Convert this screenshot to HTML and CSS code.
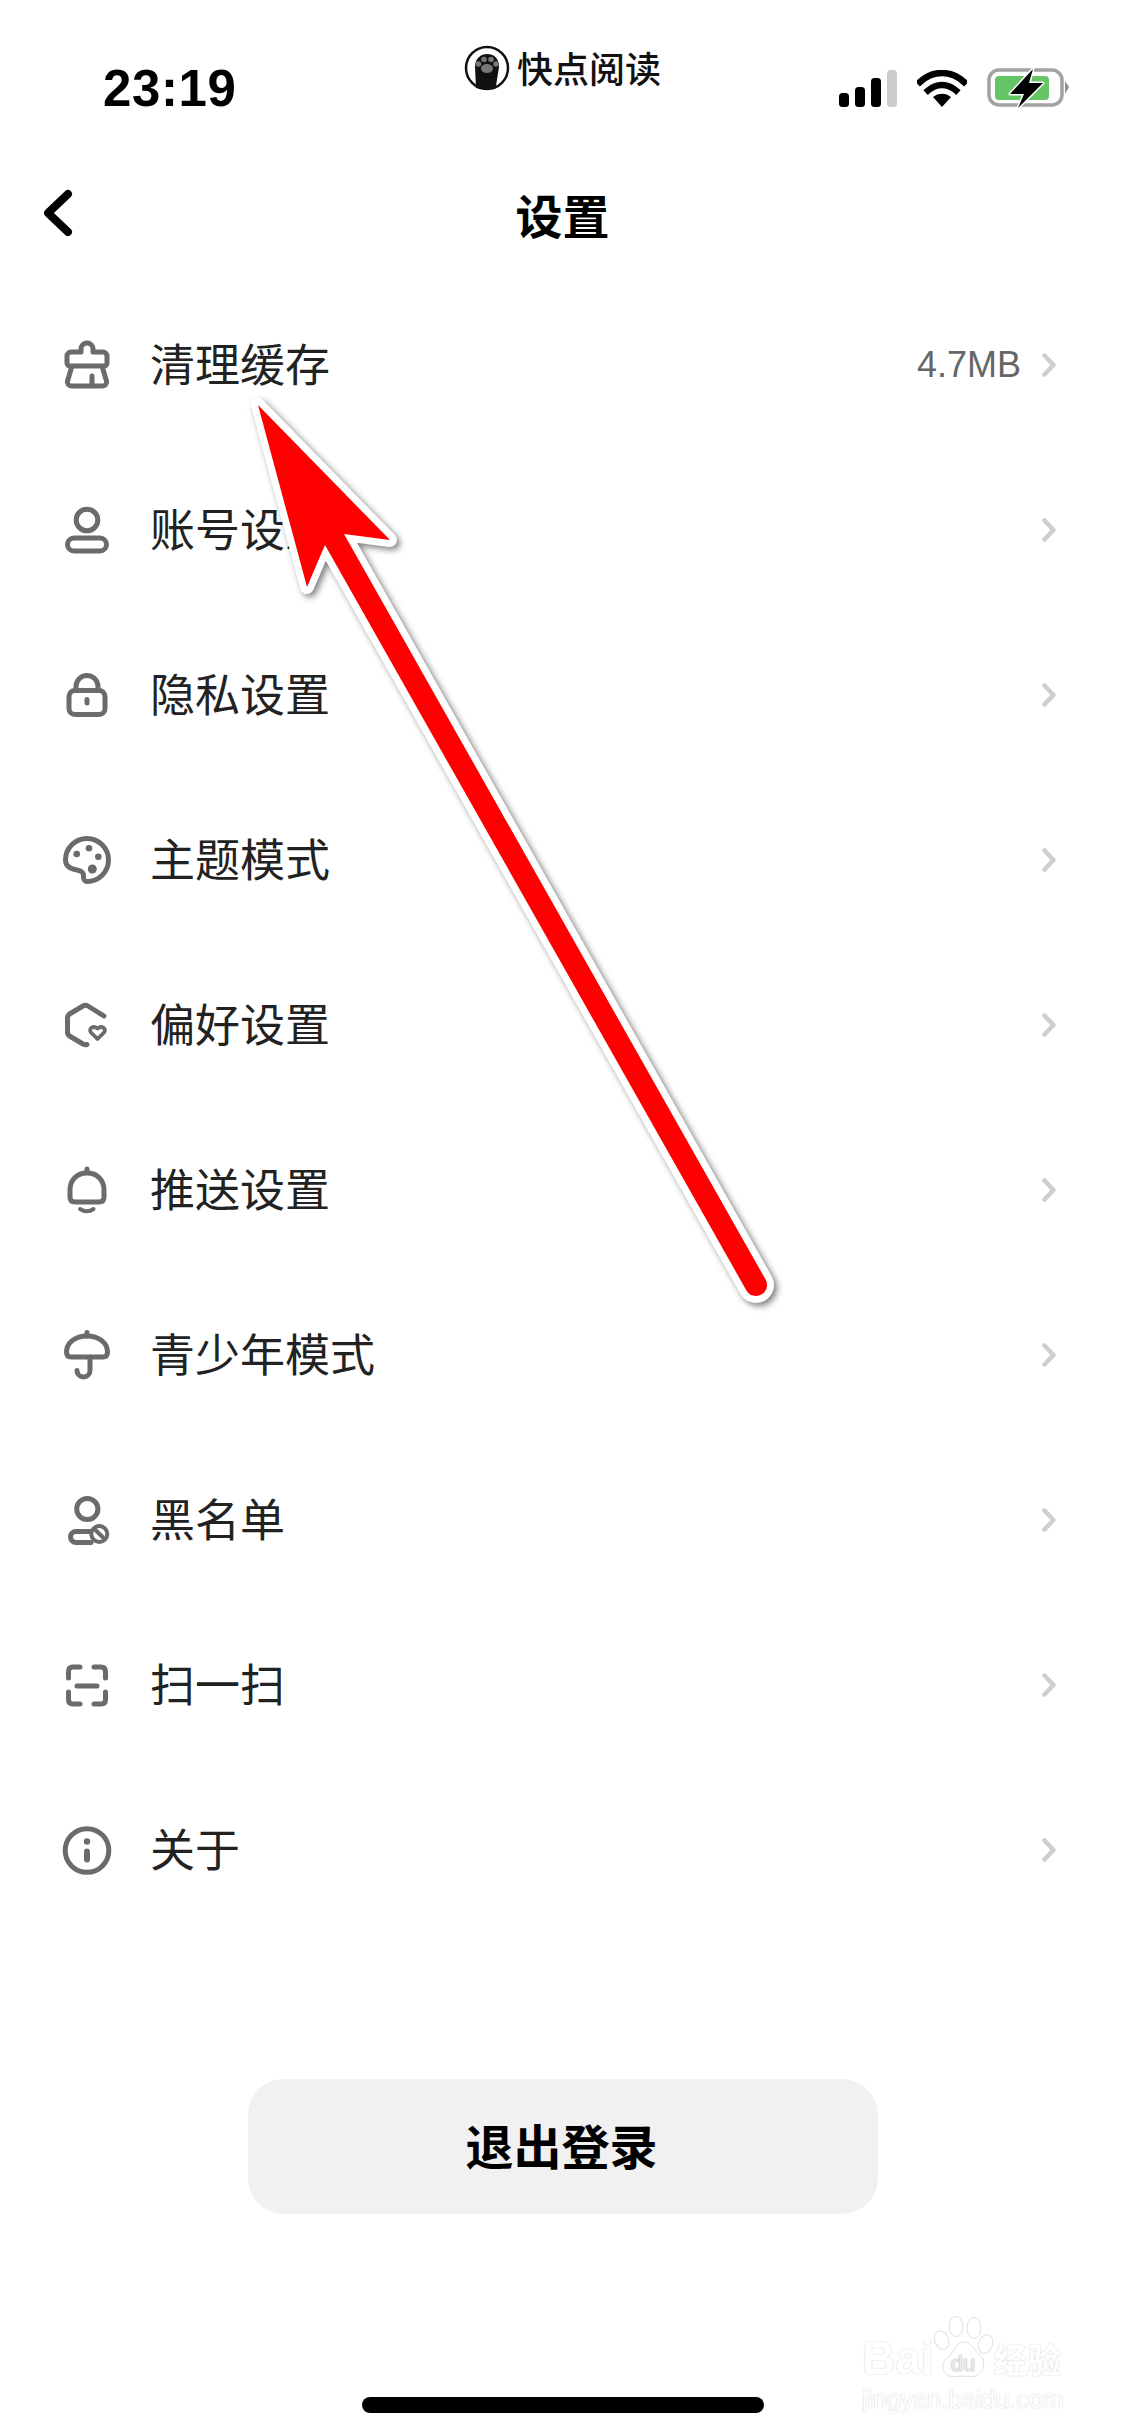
FILE: index.html
```html
<!DOCTYPE html>
<html lang="zh-CN">
<head>
  <meta charset="UTF-8" />
  <meta name="viewport" content="width=device-width, initial-scale=1" />
  <title>设置</title>
  <link rel="stylesheet" href="styles.css">
</head>
<body>
  <svg class="defs" width="0" height="0">
    <symbol id="chev" viewBox="0 0 14 24">
      <path d="M2.5 2.5 L11.5 12 L2.5 21.5" fill="none" stroke="#cfcfcf" stroke-width="4.5" stroke-linecap="round" stroke-linejoin="round"/>
    </symbol>
  </svg>

  <div class="page">
    <div class="status">
      <div class="time">23:19</div>
      <div class="brand">
        <svg class="brand-logo" viewBox="0 0 46 46">
          <circle cx="23" cy="23" r="21" fill="#fff" stroke="#111" stroke-width="2.5"/>
          <path d="M12 43 L11 22 C11 13 17 9 23 9 C30 9 35 13 35 22 L32 41 Q23 46 12 43Z" fill="#111"/>
          <circle cx="14.5" cy="19" r="2.800" fill="#777"/>
          <circle cx="20" cy="14.500" r="2.800" fill="#777"/>
          <circle cx="27" cy="14.500" r="2.800" fill="#777"/>
          <circle cx="32" cy="19" r="2.800" fill="#777"/>
          <ellipse cx="23" cy="23.500" rx="6" ry="4.500" fill="#777"/>
        </svg>
        <span class="brand-name">快点阅读</span>
      </div>
      <div class="status-icons">
        <svg class="signal" viewBox="0 0 58 37">
          <rect x="0" y="23" width="10" height="14" rx="3.5" fill="#000"/>
          <rect x="16" y="17" width="10" height="20" rx="3.5" fill="#000"/>
          <rect x="32" y="8" width="10" height="29" rx="3.5" fill="#000"/>
          <rect x="48" y="0" width="10" height="37" rx="3.5" fill="#ccc"/>
        </svg>
        <svg class="wifi" viewBox="0 0 50 37">
          <path d="M3 12 C16 0 34 0 47 12" fill="none" stroke="#000" stroke-width="6.5" stroke-linecap="square"/>
          <path d="M11 20.5 C19 13 31 13 39 20.5" fill="none" stroke="#000" stroke-width="6.5" stroke-linecap="square"/>
          <path d="M16 27 C21 22.5 29 22.5 34 27 L25 37Z" fill="#000"/>
        </svg>
        <svg class="battery" viewBox="0 0 84 40">
          <rect x="2" y="2" width="73" height="35" rx="10" fill="#fff" stroke="#a3a3a3" stroke-width="3.5"/>
          <rect x="8" y="8" width="54" height="24" rx="4" fill="#65c466"/>
          <path d="M78 13 L82 19 L78 26Z" fill="#8e8e8e"/>
          <path d="M46 1 L23 26 L37 26 L31 40 L56 15 L42 15Z" fill="#000" stroke="#fff" stroke-width="3" stroke-linejoin="round" paint-order="stroke"/>
        </svg>
      </div>
    </div>

    <div class="navbar">
      <svg class="back" viewBox="0 0 34 50">
        <path d="M28 6 L8 25 L28 44" fill="none" stroke="#000" stroke-width="8" stroke-linecap="round" stroke-linejoin="round"/>
      </svg>
      <h1>设置</h1>
    </div>

    <ul class="menu">
      <li class="row">
        <svg class="icon" viewBox="0 0 48 48">
          <path d="M18 11 V8 a6 6 0 0 1 12 0 V11 H40 a4 4 0 0 1 4 4 V22 a3 3 0 0 1 -3 3 H7 a3 3 0 0 1 -3 -3 V15 a4 4 0 0 1 4 -4Z M9 25 L4.500 40 a4 4 0 0 0 4 5 H39.500 a4 4 0 0 0 4 -5 L39 25 M29 35 V45"/>
        </svg>
        <span class="label">清理缓存</span>
        <span class="value">4.7MB</span>
        <svg class="chev"><use href="#chev"/></svg>
      </li>
      <li class="row">
        <svg class="icon" viewBox="0 0 48 48">
          <circle cx="24" cy="14" r="10.800"/>
          <rect x="4.500" y="32" width="39" height="13" rx="6.500"/>
        </svg>
        <span class="label">账号设置</span>
        <svg class="chev"><use href="#chev"/></svg>
      </li>
      <li class="row">
        <svg class="icon" viewBox="0 0 48 48">
          <rect x="6" y="19.500" width="36" height="24" rx="6"/>
          <path d="M13 19 V15.500 a11 11 0 0 1 22 0 V19"/>
          <path d="M24 28.500 V32" stroke-width="5"/>
        </svg>
        <span class="label">隐私设置</span>
        <svg class="chev"><use href="#chev"/></svg>
      </li>
      <li class="row">
        <svg class="icon" viewBox="0 0 48 48">
          <path d="M24 45.500 A21.500 21.500 0 1 0 2.500 24 C2.500 30 8 33 14 34 C19 35 21 37 20.500 41 C20.300 43.500 22 45.500 24 45.500Z"/>
          <circle class="dot" cx="13.700" cy="18" r="3.300"/>
          <circle class="dot" cx="26" cy="12.300" r="3.300"/>
          <circle class="dot" cx="35.300" cy="20.700" r="3.300"/>
          <circle class="dot" cx="29.300" cy="33" r="4.500"/>
        </svg>
        <span class="label">主题模式</span>
        <svg class="chev"><use href="#chev"/></svg>
      </li>
      <li class="row">
        <svg class="icon" viewBox="0 0 48 48">
          <path d="M41 15 L25 5 Q22.500 3.500 20 5 L6.500 13 Q4.500 14.500 4.500 17 V31 Q4.500 33.500 6.500 35 L20 43 Q22 44 24 43.500"/>
          <path d="M34.500 38 L28 31.500 C25 28 30 24 34.500 27.500 C39 24 44 28 41 31.500Z" stroke-width="3.800"/>
        </svg>
        <span class="label">偏好设置</span>
        <svg class="chev"><use href="#chev"/></svg>
      </li>
      <li class="row">
        <svg class="icon" viewBox="0 0 48 48">
          <path d="M24 7 C14 7 7 14 7 24 V31 Q7 36 12 36 H36 Q41 36 41 31 V24 C41 14 34 7 24 7Z"/>
          <path d="M24 3 V6"/>
          <path d="M17 43 Q24 47.500 30.500 43" stroke-width="4"/>
        </svg>
        <span class="label">推送设置</span>
        <svg class="chev"><use href="#chev"/></svg>
      </li>
      <li class="row">
        <svg class="icon" viewBox="0 0 48 48">
          <path d="M24 5 C12 5 3.500 12 3.500 21 Q3.500 26 8 26 H40 Q44.500 26 44.500 21 C44.500 12 36 5 24 5Z"/>
          <path d="M24 1.500 V5"/>
          <path d="M27 26 V39.500 a6.500 6.500 0 0 1 -13 0"/>
        </svg>
        <span class="label">青少年模式</span>
        <svg class="chev"><use href="#chev"/></svg>
      </li>
      <li class="row">
        <svg class="icon" viewBox="0 0 48 48">
          <circle cx="24.300" cy="13" r="10.600"/>
          <path d="M30 35.500 H13 a5.500 5.500 0 0 0 0 11 H28"/>
          <circle cx="36.300" cy="38" r="8" fill="#fff" stroke-width="4"/>
          <path d="M33 34.500 L40 41.500" stroke-width="4"/>
        </svg>
        <span class="label">黑名单</span>
        <svg class="chev"><use href="#chev"/></svg>
      </li>
      <li class="row">
        <svg class="icon" viewBox="0 0 48 48">
          <path d="M17 6 H10 Q5.500 6 5.500 10.500 V17"/>
          <path d="M31 6 H38 Q42.500 6 42.500 10.500 V17"/>
          <path d="M5.500 31 V38.500 Q5.500 43 10 43 H17"/>
          <path d="M42.500 31 V38.500 Q42.500 43 38 43 H31"/>
          <path d="M14 25 H34"/>
        </svg>
        <span class="label">扫一扫</span>
        <svg class="chev"><use href="#chev"/></svg>
      </li>
      <li class="row">
        <svg class="icon" viewBox="0 0 48 48">
          <circle cx="24" cy="24.500" r="21.800"/>
          <circle class="dot" cx="24" cy="15.500" r="3.200"/>
          <path d="M24 25.500 V33.500" stroke-width="6"/>
        </svg>
        <span class="label">关于</span>
        <svg class="chev"><use href="#chev"/></svg>
      </li>
    </ul>

    <button class="logout">退出登录</button>
    <div class="home-bar"></div>

    <!-- annotation drawn over the screenshot -->
    <svg class="arrow" viewBox="0 0 1125 2436">
      <path d="M258 405 L390 540 L344 534 L765.600 1279.600 A11 11 0 0 1 746.400 1290.400 L325 545 L307 587Z"/>
    </svg>

    <div class="watermark">
      <div class="wm-top">
        <span class="wm-bai">Bai</span>
        <svg class="wm-paw" viewBox="0 0 60 62">
          <ellipse cx="7.700" cy="24" rx="7" ry="9.500" transform="rotate(-20 7.700 24)"/>
          <ellipse cx="22" cy="10.500" rx="7" ry="10"/>
          <ellipse cx="40" cy="12" rx="7" ry="10.500"/>
          <ellipse cx="51.500" cy="28" rx="7" ry="9.500" transform="rotate(20 51.500 28)"/>
          <path d="M30 26 C38 26 40 35 46 39 C53 44 50 61 38 60.500 C32 60 26 60 20 60.500 C8 61 5 47 14 41 C21 36 22 26 30 26Z"/>
          <text x="29" y="55" text-anchor="middle">du</text>
        </svg>
        <span class="wm-cn">经验</span>
      </div>
      <div class="wm-url">jingyan.baidu.com</div>
    </div>
  </div>
</body>
</html>
```

FILE: styles.css
```css
body {
  margin: 0;
  background: #fff;
  font-family: "Noto Sans CJK SC", "Liberation Sans", sans-serif;
  color: #222;
}
.defs {
  position: absolute;
}
.page {
  position: relative;
  display: flex;
  flex-direction: column;
  width: 1125px;
  height: 2436px;
  overflow: hidden;
  background: #fff;
}

/* status bar */
.status {
  display: grid;
  grid-template-columns: 1fr auto 1fr;
  align-items: start;
  height: 150px;
  box-sizing: border-box;
  padding: 45px 54px 0;
}
.time {
  margin: 25px 0 0 49px;
  font-family: "Liberation Sans", sans-serif;
  font-size: 51px;
  font-weight: 700;
  letter-spacing: 0.6px;
  line-height: 38px;
  color: #000;
}
.brand {
  display: flex;
  align-items: center;
  gap: 7px;
  height: 45px;
}
.brand-logo {
  width: 46px;
  height: 46px;
}
.brand-name {
  font-size: 36px;
  font-weight: 500;
  line-height: 45px;
  color: #111;
}
.status-icons {
  display: flex;
  align-items: flex-start;
  justify-content: flex-end;
  gap: 20px;
  margin-top: 25px;
}
.signal {
  width: 58px;
  height: 37px;
}
.wifi {
  width: 50px;
  height: 37px;
}
.battery {
  width: 84px;
  height: 40px;
  margin-top: -2px;
}

/* nav */
.navbar {
  display: grid;
  grid-template-columns: 1fr auto 1fr;
  align-items: center;
  height: 132px;
  padding-left: 40px;
  padding-right: 40px;
  box-sizing: border-box;
}
.back {
  width: 34px;
  height: 50px;
  margin-top: -6px;
}
h1 {
  margin: 0 0 4px;
  font-size: 47px;
  font-weight: 700;
  line-height: 60px;
  color: #000;
}

/* settings list */
.menu {
  margin: 0;
  padding: 0;
  list-style: none;
}
.row {
  display: flex;
  align-items: center;
  height: 165px;
  padding: 0 69px 0 63px;
}
.icon {
  flex: none;
  width: 48px;
  height: 48px;
  margin-right: 39px;
  overflow: visible;
  fill: none;
  stroke: #6b6b6b;
  stroke-width: 5;
  stroke-linecap: round;
  stroke-linejoin: round;
}
.icon .dot {
  fill: #6b6b6b;
  stroke: none;
}
.label {
  flex: 1;
  margin-bottom: 3px;
  font-size: 45px;
  line-height: 60px;
}
.value {
  margin: 0 21px 0 0;
  font-family: "Liberation Sans", sans-serif;
  font-size: 36px;
  color: #666;
}
.chev {
  flex: none;
  width: 14px;
  height: 24px;
}

/* bottom */
.logout {
  display: block;
  flex: none;
  width: 630px;
  height: 135px;
  margin: 147px 0 0 248px;
  padding: 0 3px 5px 0;
  border: none;
  border-radius: 36px;
  background: #f1f1f1;
  font-family: inherit;
  font-size: 48px;
  font-weight: 700;
  color: #000;
}
.home-bar {
  flex: none;
  width: 402px;
  height: 16px;
  margin: 183px auto 0;
  border-radius: 8px;
  background: #000;
}

/* red arrow */
.arrow {
  position: absolute;
  top: 0;
  left: 0;
  width: 1125px;
  height: 2436px;
  pointer-events: none;
  filter: drop-shadow(3px 3px 3px rgba(0, 0, 0, 0.5));
}
.arrow path {
  fill: #f00;
  stroke: #fff;
  stroke-width: 14;
  stroke-linejoin: round;
  paint-order: stroke;
}

/* baidu watermark */
.watermark {
  position: absolute;
  left: 862px;
  top: 2317px;
  width: 206px;
  color: #fff;
  text-shadow: 0 0 1.5px #c4c4c4;
}
.wm-top {
  display: flex;
  align-items: flex-end;
  height: 61px;
}
.wm-bai {
  font-family: "Liberation Sans", sans-serif;
  font-size: 46px;
  font-weight: 700;
  line-height: 40px;
}
.wm-paw {
  flex: none;
  width: 60px;
  height: 62px;
  fill: #fff;
  stroke: #e0e0e0;
  stroke-width: 1;
}
.wm-paw text {
  font-family: "Liberation Sans", sans-serif;
  font-size: 22px;
  stroke-width: 0.6;
  fill: #fff;
}
.wm-cn {
  font-size: 34px;
  font-weight: 700;
  line-height: 38px;
}
.wm-url {
  margin-top: 6px;
  font-family: "Liberation Sans", sans-serif;
  font-size: 25px;
  line-height: 30px;
}
```
